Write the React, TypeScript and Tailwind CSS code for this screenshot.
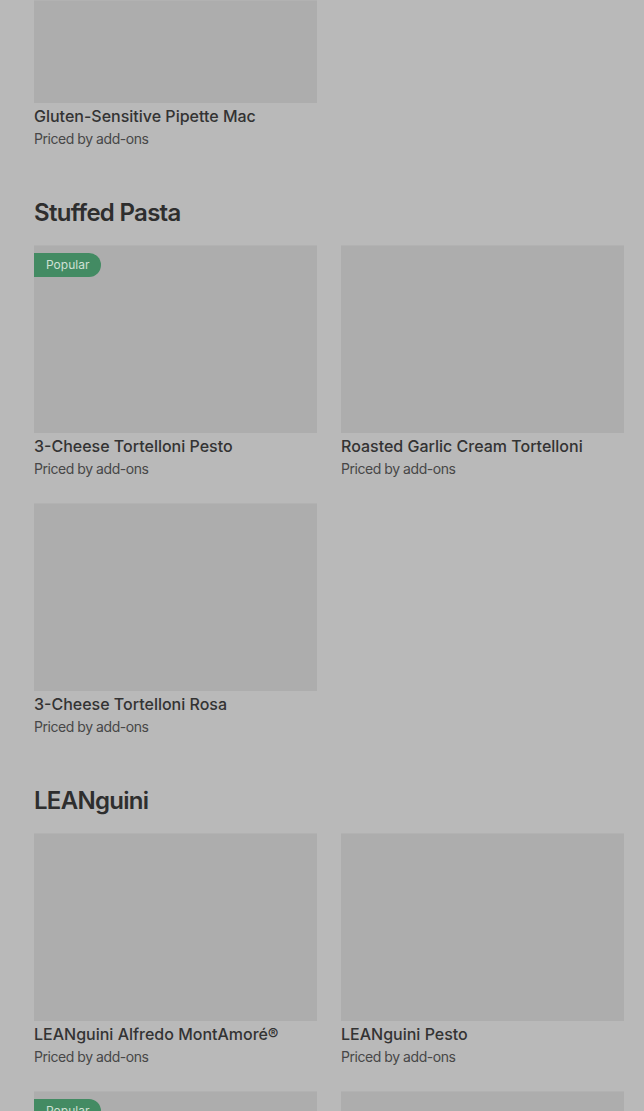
import React from 'react';

type Item = { name: string; popular?: boolean };

const sections: { title?: string; items: Item[]; cut?: boolean }[] = [
  { items: [{ name: 'Gluten-Sensitive Pipette Mac' }], cut: true },
  {
    title: 'Stuffed Pasta',
    items: [
      { name: '3-Cheese Tortelloni Pesto', popular: true },
      { name: 'Roasted Garlic Cream Tortelloni' },
      { name: '3-Cheese Tortelloni Rosa' },
    ],
  },
  {
    title: 'LEANguini',
    items: [
      { name: 'LEANguini Alfredo MontAmoré®' },
      { name: 'LEANguini Pesto' },
      { name: 'LEANguini Rosa', popular: true },
      { name: 'LEANguini Marinara' },
    ],
  },
];

function Card({ item, cut }: { item: Item; cut?: boolean }) {
  return (
    <div className="flex flex-col">
      <div className={`relative bg-[#adadad] border-t border-[#b2b2b2] ${cut ? 'h-[103px]' : 'h-[188px]'}`}>
        {item.popular && (
          <span className="absolute left-0 top-[7px] h-[24px] px-[12px] flex items-center rounded-r-full bg-[#438b63] text-[12px] text-[#cfe0d4]">
            Popular
          </span>
        )}
      </div>
      <p className="mt-[2px] text-[16px] leading-[22px] font-medium text-[#333333]">{item.name}</p>
      <p className="mt-[2px] text-[14px] leading-[20px] tracking-[-0.45px] text-[#474747]">Priced by add-ons</p>
    </div>
  );
}

export default function App() {
  return (
    <div
      className="h-[1111px] overflow-hidden bg-[#b9b9b9] pl-[34px] pr-[20px]"
      style={{ fontFamily: 'Inter, Roboto, "Liberation Sans", sans-serif' }}
    >
      {sections.map((s, si) => (
        <section key={si} className={si === 0 ? '' : 'mt-[48px]'}>
          {s.title && (
            <h2 className="text-[24px] leading-[32px] font-semibold tracking-[-0.7px] text-[#2e2e2e] mb-[16px]">
              {s.title}
            </h2>
          )}
          <div className="grid grid-cols-2 gap-x-[24px] gap-y-[24px]">
            {s.items.map((it) => (
              <Card key={it.name} item={it} cut={s.cut} />
            ))}
          </div>
        </section>
      ))}
    </div>
  );
}
